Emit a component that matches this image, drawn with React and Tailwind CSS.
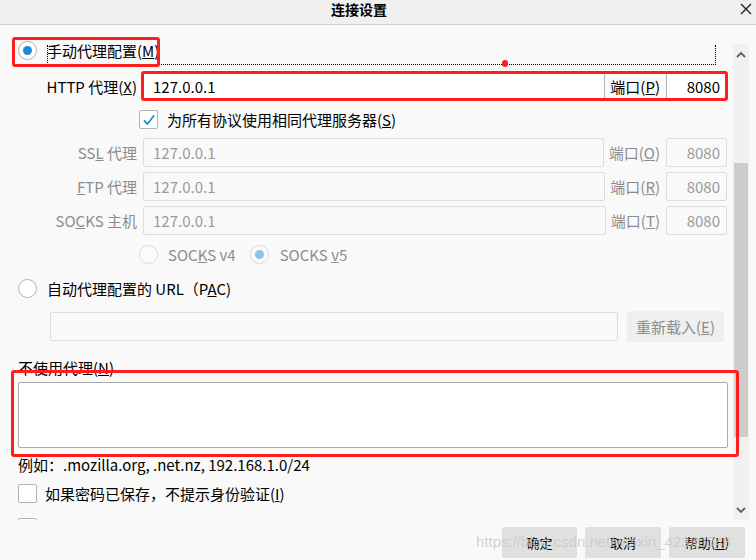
import React from "react";

function Radio({ checked, disabled }) {
  return (
    <div
      className={
        "w-[19px] h-[19px] rounded-full border flex items-center justify-center shrink-0 " +
        (disabled ? "border-[#d9d9d9] bg-[#fbfbfb]" : "border-[#b3b3b3] bg-white")
      }
    >
      {checked && (
        <div
          className={
            "w-[9px] h-[9px] rounded-full " + (disabled ? "bg-[#8fc3e6]" : "bg-[#1f8ad6]")
          }
        />
      )}
    </div>
  );
}

function Checkbox({ checked }) {
  return (
    <div className="w-[19px] h-[19px] rounded-[2px] border border-[#b3b3b3] bg-white flex items-center justify-center shrink-0">
      {checked && (
        <svg width="14" height="14" viewBox="0 0 14 14">
          <path d="M2 7.5 L5.5 11 L12 2.5" fill="none" stroke="#1f8ad6" strokeWidth="1.8" />
        </svg>
      )}
    </div>
  );
}

function ProxyRow({ label, portLabel, active, className = "" }) {
  return (
    <div className={"flex items-center shrink-0 " + className}>
      <div
        className={
          "w-[119px] text-right shrink-0 whitespace-nowrap " +
          (active ? "text-black" : "text-[#8c8c8c]")
        }
      >
        {label}
      </div>
      <div
        className={
          "ml-[6px] flex-1 h-full flex items-center px-[9px] rounded-[2px] border " +
          (active ? "bg-white border-[#b3b3b3] text-black" : "bg-[#f9f9f9] border-[#dcdcdc] text-[#9a9a9a]")
        }
      >
        127.0.0.1
      </div>
      <div
        className={
          "ml-[5px] whitespace-nowrap shrink-0 " + (active ? "text-black" : "text-[#8c8c8c]")
        }
      >
        {portLabel}
      </div>
      <div
        className={
          "ml-[6px] w-[61px] h-full flex items-center justify-end pr-[6px] rounded-[2px] border shrink-0 " +
          (active ? "bg-white border-[#b3b3b3] text-black" : "bg-[#f9f9f9] border-[#dcdcdc] text-[#9a9a9a]")
        }
      >
        8080
      </div>
    </div>
  );
}

export default function App() {
  return (
    <div className="w-[756px] h-[560px] relative overflow-hidden bg-[#f9f9f9] flex flex-col text-[15px] text-black font-['Noto_Sans_CJK_SC','Noto_Sans',sans-serif] leading-none">
      {/* Title bar */}
      <div className="h-[25px] shrink-0 bg-[#f0f0f0] border-b border-[#cdcdcd] flex items-start">
        <div className="flex-1 text-center text-[14px] leading-[16px] font-bold pt-[1px]">连接设置</div>
        <div className="w-[38px] flex justify-end pr-[4px] pt-[3px]">
          <svg width="12" height="12" viewBox="0 0 12 12">
            <path d="M1 1 L11 11 M11 1 L1 11" stroke="#222" strokeWidth="1.4" />
          </svg>
        </div>
      </div>

      {/* Body */}
      <div className="h-[495px] shrink-0 flex">
        <div className="flex-1 flex flex-col pl-[18px] pr-[6px] overflow-hidden">
          <div className="mt-[15px] h-[20px] shrink-0 flex items-center gap-[10px]">
            <Radio checked />
            <span>
              手动代理配置(<u>M</u>)
            </span>
          </div>

          <ProxyRow
            className="mt-[12px] h-[28px]"
            active
            label={
              <>
                HTTP 代理(<u>X</u>)
              </>
            }
            portLabel={
              <>
                端口(<u>P</u>)
              </>
            }
          />

          <div className="mt-[10px] h-[19px] shrink-0 flex items-center ml-[121px] gap-[9px]">
            <Checkbox checked />
            <span>
              为所有协议使用相同代理服务器(<u>S</u>)
            </span>
          </div>

          <ProxyRow
            className="mt-[9px] h-[29px]"
            label={
              <>
                SS<u>L</u> 代理
              </>
            }
            portLabel={
              <>
                端口(<u>O</u>)
              </>
            }
          />
          <ProxyRow
            className="mt-[5px] h-[29px]"
            label={
              <>
                <u>F</u>TP 代理
              </>
            }
            portLabel={
              <>
                端口(<u>R</u>)
              </>
            }
          />
          <ProxyRow
            className="mt-[5px] h-[29px]"
            label={
              <>
                SO<u>C</u>KS 主机
              </>
            }
            portLabel={
              <>
                端口(<u>T</u>)
              </>
            }
          />

          <div className="mt-[10px] h-[19px] shrink-0 flex items-center ml-[121px] text-[#8c8c8c]">
            <Radio disabled />
            <span className="ml-[10px]">
              SOC<u>K</u>S v4
            </span>
            <div className="ml-[14px]">
              <Radio checked disabled />
            </div>
            <span className="ml-[11px]">
              SOCKS <u>v</u>5
            </span>
          </div>

          <div className="mt-[15px] h-[19px] shrink-0 flex items-center gap-[10px]">
            <Radio />
            <span>
              自动代理配置的 URL（P<u>A</u>C)
            </span>
          </div>

          <div className="mt-[13px] h-[31px] shrink-0 flex items-center">
            <div className="ml-[32px] w-[568px] h-[29px] rounded-[2px] border border-[#dcdcdc] bg-[#f9f9f9]" />
            <div className="ml-[9px] w-[97px] h-[31px] rounded-[2px] bg-[#efefef] text-[#8c8c8c] flex items-center justify-center">
              重新载入(<u>E</u>)
            </div>
          </div>

          <div className="mt-[15px] h-[20px] shrink-0 flex items-center">
            不使用代理(<u>N</u>)
          </div>

          <div className="mt-[5px] w-[710px] h-[66px] shrink-0 bg-white border border-[#ababab] rounded-[2px]" />

          <div className="mt-[6px] h-[20px] shrink-0 flex items-center">
            例如：.mozilla.org, .net.nz, 192.168.1.0/24
          </div>

          <div className="mt-[10px] h-[19px] shrink-0 flex items-center gap-[8px]">
            <Checkbox />
            <span>
              如果密码已保存，不提示身份验证(<u>I</u>)
            </span>
          </div>

          <div className="mt-[15px] h-[19px] shrink-0 flex items-center">
            <Checkbox />
          </div>
        </div>

        {/* Scrollbar */}
        <div className="w-[16px] mr-[7px] mt-[19px] bg-[#f0f0f0] flex flex-col items-center">
          <div className="h-[18px] flex items-center justify-center mt-[1px]">
            <svg width="10" height="7" viewBox="0 0 10 7">
              <path d="M1 6 L5 2 L9 6" fill="none" stroke="#606060" strokeWidth="1.8" />
            </svg>
          </div>
          <div className="mt-[100px] w-[14px] h-[274px] bg-[#cdcdcd]" />
          <div className="flex-1" />
          <div className="h-[18px] mb-[1px] flex items-center justify-center">
            <svg width="10" height="7" viewBox="0 0 10 7">
              <path d="M1 1 L5 5 L9 1" fill="none" stroke="#606060" strokeWidth="1.8" />
            </svg>
          </div>
        </div>
      </div>

      {/* Footer */}
      <div className="flex-1 flex justify-end items-start pt-[7px] pr-[11px] gap-[8px] text-[13px]">
        <div className="w-[75px] h-[31px] bg-[#e0e0e0] rounded-[2px] flex items-center justify-center">确定</div>
        <div className="w-[76px] h-[31px] bg-[#e0e0e0] rounded-[2px] flex items-center justify-center">取消</div>
        <div className="w-[76px] h-[31px] bg-[#e0e0e0] rounded-[2px] flex items-center justify-center">
          帮助(<u>H</u>)
        </div>
      </div>

      {/* Focus ring */}
      <div className="absolute left-[47px] top-[45px] w-[669px] h-[20px] border-l border-r border-b border-dotted border-black pointer-events-none" />

      {/* Red annotation boxes */}
      <div className="absolute left-[12px] top-[37px] w-[148px] h-[30px] border-[3px] border-[#ff1e1e] rounded-[3px] pointer-events-none" />
      <div className="absolute left-[141px] top-[71px] w-[587px] h-[30px] border-[3px] border-[#ff1e1e] rounded-[3px] pointer-events-none" />
      <div className="absolute left-[11px] top-[370px] w-[728px] h-[87px] border-[3px] border-[#ff1e1e] rounded-[3px] pointer-events-none" />
      <div className="absolute left-[502px] top-[60px] w-[6px] h-[7px] rounded-[3px] bg-[#ff1e1e] pointer-events-none" />

      {/* Watermark */}
      <div className="absolute left-[476px] top-[534px] text-[15px] text-[#c8c8c8]/80 font-['Liberation_Sans',sans-serif] whitespace-nowrap pointer-events-none">
        https://blog.csdn.net/weixin_42330048
      </div>
    </div>
  );
}
